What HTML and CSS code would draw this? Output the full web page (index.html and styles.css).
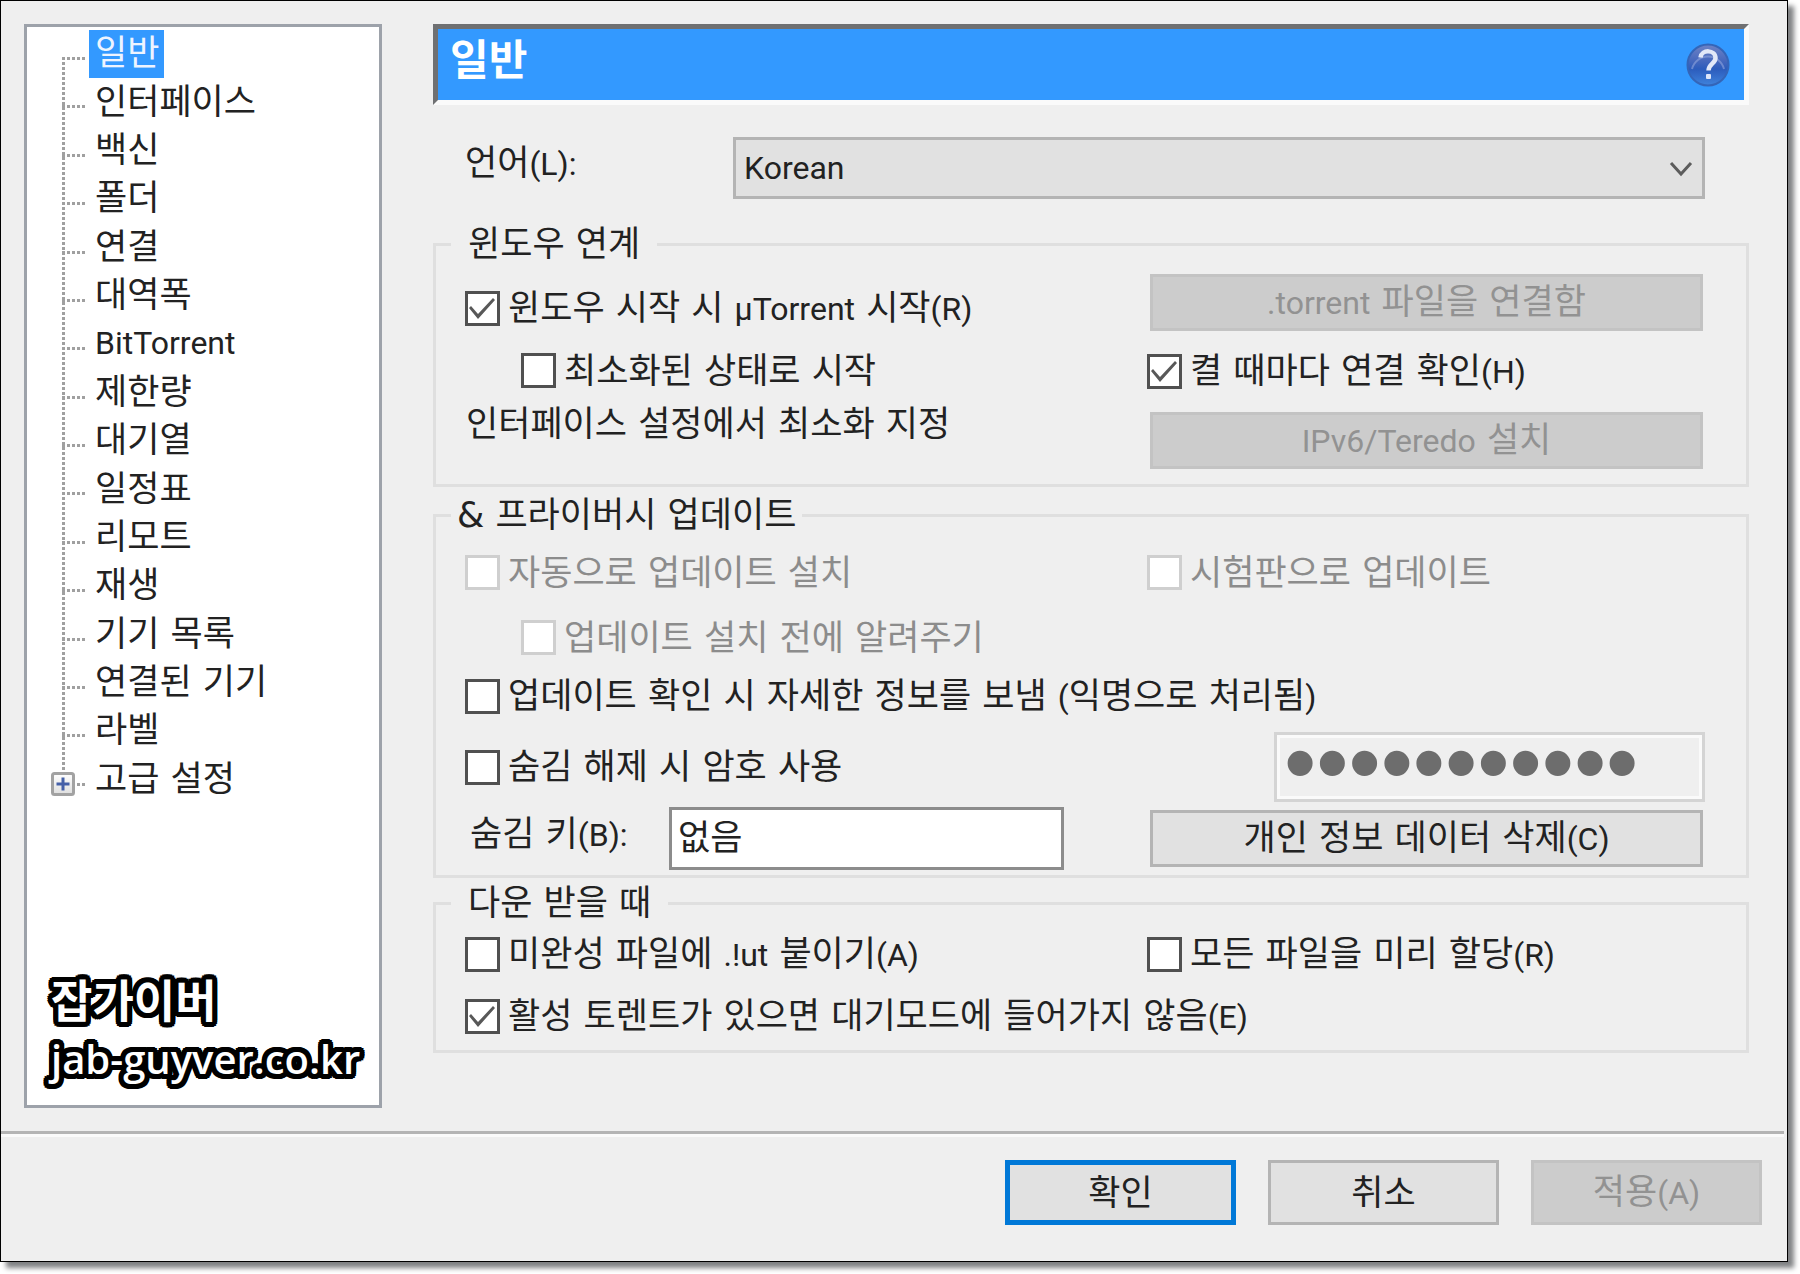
FILE: index.html
```html
<!DOCTYPE html>
<html lang="ko">
<head>
<meta charset="utf-8">
<meta name="viewport" content="width=device-width, initial-scale=1">
<title>설정 - 일반</title>
<link rel="stylesheet" href="styles.css">
</head>
<body>
<form class="dialog">
  <div class="content">
    <nav class="sidebar" aria-label="설정 항목">
      <ul class="tree">
        <li><a class="selected" href="#general">일반</a></li>
        <li><a href="#interface">인터페이스</a></li>
        <li><a href="#antivirus">백신</a></li>
        <li><a href="#folders">폴더</a></li>
        <li><a href="#connection">연결</a></li>
        <li><a href="#bandwidth">대역폭</a></li>
        <li><a href="#bittorrent"><span class="latin">BitTorrent</span></a></li>
        <li><a href="#limits">제한량</a></li>
        <li><a href="#queue">대기열</a></li>
        <li><a href="#schedule">일정표</a></li>
        <li><a href="#remote">리모트</a></li>
        <li><a href="#playback">재생</a></li>
        <li><a href="#devices">기기 목록</a></li>
        <li><a href="#paired">연결된 기기</a></li>
        <li><a href="#label">라벨</a></li>
        <li class="branch">
          <svg class="expander" viewBox="0 0 24 24" aria-hidden="true">
            <defs><linearGradient id="box" x1="0" y1="0" x2="0" y2="1"><stop offset="0" stop-color="#fff"/><stop offset="1" stop-color="#dedede"/></linearGradient></defs>
            <rect x="1.5" y="1.5" width="21" height="21" rx="2" fill="url(#box)" stroke="#a2a2a2" stroke-width="3"/>
            <path d="M5.500 12h13M12 5.500v13" stroke="#4560a8" stroke-width="3"/>
          </svg>
          <a href="#advanced">고급 설정</a>
        </li>
      </ul>
      <p class="watermark">잡가이버<br><span class="site">jab-guyver.co.kr</span></p>
    </nav>

    <main class="panel">
      <header class="title">
        <h1>일반</h1>
        <button class="help" type="button" aria-label="도움말">
          <svg viewBox="0 0 44 44" aria-hidden="true">
            <defs>
              <linearGradient id="ball" x1="0" y1="0" x2="0" y2="1"><stop offset="0" stop-color="#6f83c6"/><stop offset=".4" stop-color="#4668bd"/><stop offset=".6" stop-color="#2c5cbc"/><stop offset="1" stop-color="#3f83dc"/></linearGradient>
            </defs>
            <circle cx="22" cy="22" r="20.500" fill="url(#ball)" stroke="#3465b8" stroke-width="2"/>
            <path d="M6 26a16.500 16.500 0 0 1 32 0" fill="none" stroke="#8fa3dc" stroke-width="2" opacity=".6"/>
            <path d="M14.500 14.500c1-8.500 15-8 15 .5 0 5.500-7 6-7 12.500" fill="none" stroke="#e2e8f8" stroke-width="4.500"/>
            <rect x="20" y="31" width="5" height="5" rx="1" fill="#dce6fa"/>
          </svg>
        </button>
      </header>

      <div class="language">
        <label for="lang">언어<span class="latin">(L):</span></label>
        <div class="dropdown">
          <select id="lang"><option>Korean</option></select>
          <svg class="chevron" viewBox="0 0 24 16" aria-hidden="true"><path d="M2 2l10 11L22 2" fill="none" stroke="#5c5c5c" stroke-width="3"/></svg>
        </div>
      </div>

      <fieldset class="group windows">
        <legend>윈도우 연계</legend>
        <div class="columns">
          <div class="stack">
            <label class="check"><input type="checkbox" checked><span>윈도우 시작 시 <span class="latin">µTorrent</span> 시작<span class="latin">(R)</span></span></label>
            <label class="check nested"><input type="checkbox"><span>최소화된 상태로 시작</span></label>
            <p class="note">인터페이스 설정에서 최소화 지정</p>
          </div>
          <div class="stack actions">
            <button class="button" type="button" disabled><span class="latin">.torrent</span> 파일을 연결함</button>
            <label class="check"><input type="checkbox" checked><span>켤 때마다 연결 확인<span class="latin">(H)</span></span></label>
            <button class="button" type="button" disabled><span class="latin">IPv6/Teredo</span> 설치</button>
          </div>
        </div>
      </fieldset>

      <fieldset class="group privacy">
        <legend>&amp; 프라이버시 업데이트</legend>
        <div class="stack updates">
          <div class="columns">
            <label class="check"><input type="checkbox" disabled><span>자동으로 업데이트 설치</span></label>
            <label class="check"><input type="checkbox" disabled><span>시험판으로 업데이트</span></label>
          </div>
          <label class="check nested"><input type="checkbox" disabled><span>업데이트 설치 전에 알려주기</span></label>
          <label class="check"><input type="checkbox"><span>업데이트 확인 시 자세한 정보를 보냄 <span class="latin">(</span>익명으로 처리됨<span class="latin">)</span></span></label>
        </div>
        <div class="columns boss">
          <label class="check"><input type="checkbox"><span>숨김 해제 시 암호 사용</span></label>
          <input class="password" type="password" value="password123" aria-label="암호" disabled>
          <div class="key">
            <label for="bosskey">숨김 키<span class="latin">(B):</span></label>
            <input id="bosskey" type="text" value="없음">
          </div>
          <button class="button" type="button">개인 정보 데이터 삭제<span class="latin">(C)</span></button>
        </div>
      </fieldset>

      <fieldset class="group download">
        <legend>다운 받을 때</legend>
        <div class="stack">
          <div class="columns">
            <label class="check"><input type="checkbox"><span>미완성 파일에 <span class="latin">.!ut</span> 붙이기<span class="latin">(A)</span></span></label>
            <label class="check"><input type="checkbox"><span>모든 파일을 미리 할당<span class="latin">(R)</span></span></label>
          </div>
          <label class="check"><input type="checkbox" checked><span>활성 토렌트가 있으면 대기모드에 들어가지 않음<span class="latin">(E)</span></span></label>
        </div>
      </fieldset>
    </main>
  </div>

  <footer class="footer">
    <button class="button default" type="submit">확인</button>
    <button class="button" type="button">취소</button>
    <button class="button" type="button" disabled>적용<span class="latin">(A)</span></button>
  </footer>
</form>
</body>
</html>
```
FILE: styles.css
```css
* {
  box-sizing: border-box;
}

body {
  margin: 0;
  padding: 0 12px 12px 0;
  background: #fff;
  color: #222;
  font-family: "DejaVu Sans", "Noto Sans CJK KR", sans-serif;
  font-size: 35px;
  line-height: 40px;
}

button,
input,
select {
  margin: 0;
  color: inherit;
  font: inherit;
}

p,
h1,
ul {
  margin: 0;
  padding: 0;
}

.latin {
  font-family: Roboto, sans-serif;
  font-size: 32px;
}

.dialog {
  border: 1px solid #000;
  background: #efefef;
  box-shadow: 6px 6px 5px #808284;
}

.content {
  display: flex;
  gap: 51px;
  padding: 23px 38px 23px 23px;
}

/* Category tree */
.sidebar {
  flex: 0 0 358px;
  padding: 3px 0 18px;
  border: 3px solid #9da2aa;
  background: #fff;
}

.tree {
  position: relative;
  display: grid;
  grid-auto-rows: 1fr;
  min-height: 774px;
  list-style: none;
}

.tree::before {
  content: "";
  position: absolute;
  top: 27px;
  bottom: 24px;
  left: 35px;
  width: 3px;
  background: repeating-linear-gradient(#a0a0a0 0 3px, transparent 3px 5px);
}

.tree li {
  position: relative;
  display: flex;
  padding-left: 62px;
}

.tree li::before {
  content: "";
  position: absolute;
  top: 27px;
  left: 35px;
  width: 23px;
  height: 3px;
  background: repeating-linear-gradient(90deg, #a0a0a0 0 3px, transparent 3px 5px);
}

.tree a {
  display: flex;
  align-items: center;
  padding: 0 5px 2px 6px;
  color: inherit;
  text-decoration: none;
  white-space: nowrap;
}

.tree .selected {
  background: #39f;
  color: #eef4ff;
}

.expander {
  position: absolute;
  top: 16px;
  left: 24px;
  width: 24px;
  height: 24px;
}

.watermark {
  margin-top: 169px;
  padding-left: 24px;
  color: #fff;
  font-family: "Open Sans", "Noto Sans CJK KR", sans-serif;
  font-size: 45px;
  font-weight: 700;
  line-height: 56px;
  white-space: nowrap;
  text-shadow:
    5px 0 #000, -5px 0 #000, 0 5px #000, 0 -5px #000,
    4px 4px #000, -4px 4px #000, 4px -4px #000, -4px -4px #000,
    5px 2px #000, -5px 2px #000, 5px -2px #000, -5px -2px #000,
    2px 5px #000, -2px 5px #000, 2px -5px #000, -2px -5px #000,
    2px 2px #000, -2px 2px #000, 2px -2px #000, -2px -2px #000;
}

.site {
  font-size: 40px;
  font-weight: 600;
}

/* Settings panel */
.panel {
  flex: 1;
  min-width: 0;
}

.title {
  display: flex;
  align-items: center;
  justify-content: space-between;
  height: 81px;
  padding: 0 14px 0 12px;
  border: 5px solid;
  border-color: #6f7072 #fafafa #fafafa #6f7072;
  background: #39f;
  color: #fff;
}

.title h1 {
  padding-bottom: 8px;
  font-size: 42px;
  font-weight: 700;
  line-height: 56px;
}

.help {
  display: block;
  width: 44px;
  height: 44px;
  padding: 0;
  border: 0;
  background: none;
}

.help svg {
  display: block;
}

.language {
  display: flex;
  align-items: center;
  margin: 32px 0 25px;
  padding: 0 44px 0 32px;
}

.language label {
  flex: 0 0 268px;
  padding-bottom: 10px;
}

.dropdown {
  position: relative;
  flex: 1;
}

.dropdown select {
  display: block;
  width: 100%;
  height: 62px;
  padding: 0 60px 0 8px;
  border: 3px solid #b4b4b4;
  border-radius: 0;
  background: #e1e1e1;
  font-family: Roboto, sans-serif;
  font-size: 32px;
  appearance: none;
}

.chevron {
  position: absolute;
  top: 24px;
  right: 12px;
  width: 24px;
  height: 16px;
  pointer-events: none;
}

.group {
  min-width: 0;
  margin: 0;
  padding: 0 41px 0 29px;
  border: 3px solid #dfdfdf;
}

.group legend {
  height: 40px;
  margin-left: -14px;
  padding: 0 17px;
}

.windows {
  padding-top: 10px;
  padding-bottom: 15px;
}

.privacy {
  margin-top: 8px;
  padding-top: 20px;
  padding-bottom: 5px;
}

.privacy legend {
  padding: 0 6px;
}

.download {
  margin-top: 5px;
  padding-top: 14px;
  padding-bottom: 16px;
}

.columns {
  display: grid;
  grid-template-columns: minmax(0, 682fr) minmax(0, 558fr);
}

.stack {
  display: flex;
  flex-direction: column;
  gap: 27px;
}

.windows .stack {
  padding-top: 17px;
}

.windows .actions {
  gap: 23px;
  padding-top: 0;
}

.note {
  margin-top: -11px;
  padding-left: 1px;
}

.check {
  display: flex;
  align-items: center;
  gap: 8px;
  height: 35px;
  white-space: nowrap;
}

.nested {
  margin-left: 56px;
}

.updates .nested {
  margin-top: 3px;
  margin-bottom: -3px;
}

.check input {
  position: relative;
  flex: none;
  width: 35px;
  height: 35px;
  border: 3px solid #505050;
  background: #fff;
  appearance: none;
}

.check input:checked::before {
  content: "";
  position: absolute;
  inset: 0;
  background: #585858;
  clip-path: polygon(1px 14px, 3px 12px, 10px 20px, 25px 4px, 27px 6px, 10px 25px);
}

.check input:disabled {
  border-color: #cfcfcf;
}

.check input:disabled + span {
  color: #8c8c8c;
}

.button {
  height: 57px;
  padding: 0;
  border: 3px solid #b4b4b4;
  background: #e1e1e1;
  text-align: center;
  white-space: nowrap;
}

.columns .button {
  margin: 0 2px 0 3px;
}

.button:disabled {
  border-color: #c3c3c3;
  background: #ccc;
  color: #929292;
}

.updates {
  margin-bottom: 18px;
}

.boss {
  row-gap: 5px;
  align-items: center;
}

.password {
  justify-self: end;
  width: 431px;
  height: 70px;
  padding: 0 7px 10px;
  border: 3px solid #d4d4d4;
  outline: 3px solid #fafafa;
  outline-offset: -6px;
  background: #efefef;
  color: #6d6d6d;
  font-family: "Liberation Sans", sans-serif;
  font-size: 92px;
  line-height: 54px;
}

.key {
  display: flex;
  align-items: center;
  padding-left: 5px;
}

.key label {
  flex: 0 0 199px;
  padding-bottom: 8px;
}

.key input {
  width: 395px;
  height: 63px;
  padding: 0 6px 8px;
  border: 3px solid #8c8c8c;
  background: #fff;
}

/* Dialog buttons */
.footer {
  display: flex;
  justify-content: flex-end;
  gap: 32px;
  margin-right: 3px;
  padding: 26px 22px 36px;
  border-top: 3px solid #b4b4b4;
  box-shadow: inset 0 3px #fafafa;
}

.footer .button {
  width: 231px;
  height: 65px;
}

.footer .default {
  border: 5px solid #0078d7;
}
```
